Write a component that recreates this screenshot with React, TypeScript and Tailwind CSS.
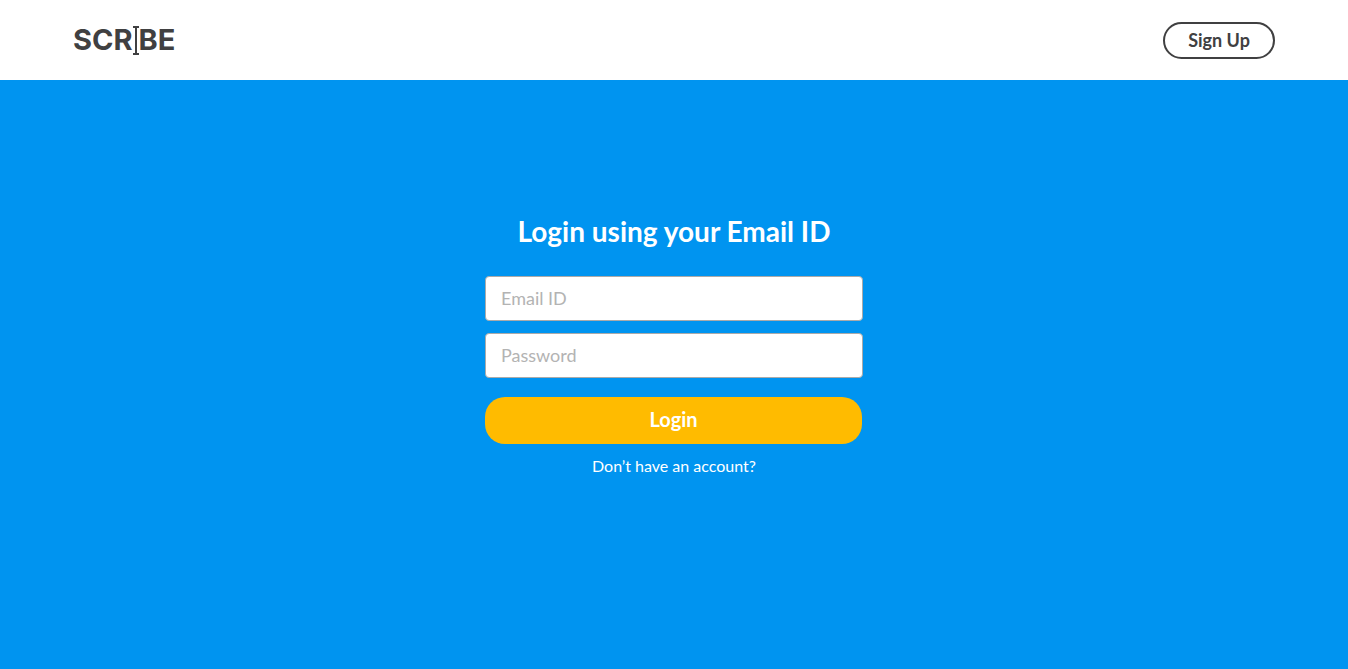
import type { FormEvent } from "react";

function Logo() {
  return (
    <a
      href="#home"
      aria-label="Scribe"
      className="flex items-center font-['Inter',sans-serif] text-[29px] leading-10 font-bold text-[#404041]"
    >
      <span>SCR</span>
      <svg width="6" height="29" viewBox="0 0 6 29" fill="currentColor" aria-hidden="true">
        <path d="M0 0h6v2H4v25h2v2H0v-2h2V2H0z" />
      </svg>
      <span>BE</span>
    </a>
  );
}

type FieldProps = { id: string; type: string; label: string };

function Field({ id, type, label }: FieldProps) {
  return (
    <input
      id={id}
      name={id}
      type={type}
      aria-label={label}
      placeholder={label}
      className="block h-[45px] w-full rounded border border-[#aaaaaa] bg-white px-[15px] pb-0.5 text-lg text-[#404041] placeholder:text-[#b3b3b3]"
    />
  );
}

export default function App() {
  const submit = (event: FormEvent) => event.preventDefault();

  return (
    <div className="flex min-h-screen flex-col bg-white font-['Lato',sans-serif]">
      <header className="flex h-20 items-center justify-between px-[73px]">
        <Logo />
        <button
          type="button"
          className="h-[37px] w-28 rounded-full border-2 border-[#404041] text-lg leading-none font-bold text-[#404041]"
        >
          Sign Up
        </button>
      </header>
      <main className="flex flex-1 flex-col items-center bg-[#0094f0] px-4 pt-[131px] pb-12">
        <h1 className="text-[28px] leading-10 font-bold text-white">Login using your Email ID</h1>
        <form onSubmit={submit} className="mt-[25px] flex w-full max-w-[378px] flex-col gap-3">
          <Field id="email" type="email" label="Email ID" />
          <Field id="password" type="password" label="Password" />
          <button
            type="submit"
            className="mt-[7px] mr-px h-[47px] rounded-[20px] bg-[#ffbb00] pb-1 text-xl font-bold text-white"
          >
            Login
          </button>
        </form>
        <a href="#signup" className="mt-2.5 text-base text-white">
          Don’t have an account?
        </a>
      </main>
    </div>
  );
}
